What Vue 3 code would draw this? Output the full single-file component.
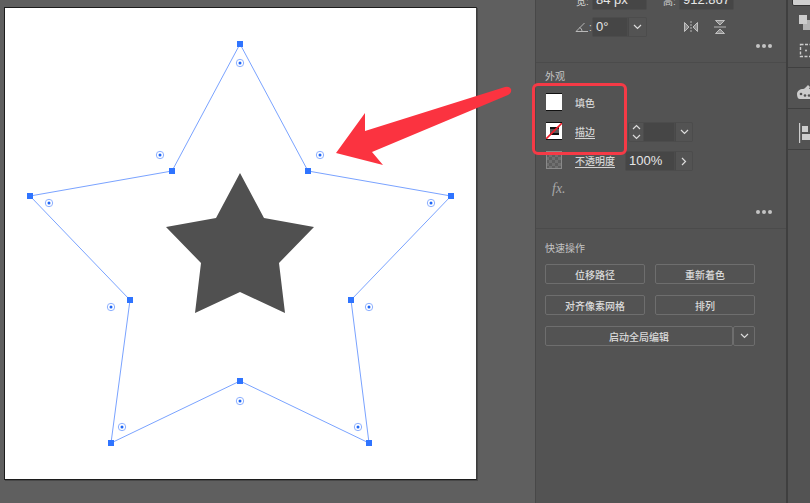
<template>
  <div class="app">
    <main class="canvas">
      <div class="artboard">
        <svg class="art" viewBox="5 8 471 471" width="471" height="471">
          <polygon class="solid" :points="innerStar" />
          <polygon class="path" :points="outerStar" />
          <rect v-for="p in anchors" :key="p.join()" class="anchor" :x="p[0] - 3" :y="p[1] - 3" width="6" height="6" />
          <g v-for="p in widgets" :key="p.join()">
            <circle class="widget" :cx="p[0]" :cy="p[1]" r="3.7" />
            <circle class="widget-dot" :cx="p[0]" :cy="p[1]" r="1.5" />
          </g>
        </svg>
      </div>
    </main>

    <aside class="panel">
      <section class="sec transform">
        <div class="row size-row">
          <span class="lbl">宽:</span>
          <div class="field w55">84 px</div>
          <span class="lbl h-lbl">高:</span>
          <div class="field w55">912.867</div>
        </div>
        <div class="row angle-row">
          <svg class="angle" viewBox="0 0 14 10" width="14" height="10">
            <path d="M1 9.5h12M1 9.5 9.5 1M7 9.5C7 7.5 6 6 4.5 5.5" />
          </svg>
          <span class="colon">:</span>
          <div class="combo">
            <div class="field w36 flat-r">0°</div>
            <div class="caret w19"><svg viewBox="0 0 9 6" width="9" height="6"><path d="M1 1l3.5 3.5L8 1" /></svg></div>
          </div>
          <svg class="flip flip-h" viewBox="0 0 14 12" width="14" height="12">
            <path class="fill" d="M.5 1.5v9L5 6zM13.5 1.5v9L9 6z" />
            <path d="M7 0v12" stroke-dasharray="2 1" />
          </svg>
          <svg class="flip flip-v" viewBox="0 0 12 14" width="12" height="14">
            <path class="fill" d="M1.5.5h9L6 5zM1.5 13.5h9L6 9z" />
            <path d="M0 7h12" />
          </svg>
        </div>
        <div class="more"><i></i><i></i><i></i></div>
      </section>

      <section class="sec look">
        <h3>外观</h3>
        <div class="row look-row first">
          <div class="swatch"></div>
          <span class="name">填色</span>
        </div>
        <div class="row look-row stroke">
          <div class="swatch stroke-swatch">
            <span class="inner"></span>
            <svg viewBox="0 0 16 16" width="16" height="16"><path d="M0 16 16 0" /></svg>
          </div>
          <span class="name link">描边</span>
          <div class="combo stepper">
            <div class="caret w15 steps">
              <svg viewBox="0 0 9 16" width="9" height="16"><path d="M1 5l3.5-3.5L8 5M1 11l3.5 3.5L8 11" /></svg>
            </div>
            <div class="field w32 flat"></div>
            <div class="caret w18"><svg viewBox="0 0 9 6" width="9" height="6"><path d="M1 1l3.5 3.5L8 1" /></svg></div>
          </div>
        </div>
        <div class="row look-row opacity">
          <div class="swatch checker"></div>
          <span class="name link">不透明度</span>
          <div class="combo op-combo">
            <div class="field w50 flat-r">100%</div>
            <div class="caret w18"><svg viewBox="0 0 6 9" width="6" height="9"><path d="M1 1l3.5 3.5L1 8" /></svg></div>
          </div>
        </div>
        <div class="fx">fx<span>.</span></div>
        <div class="more"><i></i><i></i><i></i></div>
      </section>

      <section class="sec quick">
        <h3>快速操作</h3>
        <div class="btn-grid">
          <button v-for="b in buttons" :key="b">{{ b }}</button>
        </div>
        <div class="global">
          <button class="wide">启动全局编辑</button>
          <button class="drop"><svg viewBox="0 0 9 6" width="9" height="6"><path d="M1 1l3.5 3.5L8 1" /></svg></button>
        </div>
      </section>
    </aside>

    <nav class="strip">
      <div class="group g1">
        <span class="tab"></span>
        <svg viewBox="0 0 14 15" width="14" height="15">
          <path class="icon-fill" d="M0 0h8v9H0z" />
          <path class="icon-fill" d="M4 5h9v10H4z" opacity=".8" />
        </svg>
        <svg viewBox="0 0 14 15" width="14" height="15">
          <rect class="icon-line" x="1.5" y="1.5" width="11" height="12" stroke-dasharray="3 1.5" />
          <circle class="icon-fill" cx="7" cy="7.5" r="1" />
        </svg>
      </div>
      <div class="group g2">
        <svg viewBox="0 0 16 16" width="16" height="16">
          <path class="icon-fill" d="M0 11c0-3 3-5 6-5 1.5 0 3-2 5-4l2 2-1 2h4v10H3c-2 0-3-2-3-5z" />
          <circle cx="4" cy="11" r="1.3" fill="#535353" />
          <circle cx="8" cy="12.5" r="1.3" fill="#535353" />
          <circle cx="12" cy="12.5" r="1.3" fill="#535353" />
        </svg>
      </div>
      <div class="group g3">
        <svg viewBox="0 0 12 20" width="12" height="20">
          <path class="icon-line" d="M.5 0v20" />
          <path class="icon-fill" d="M3 3h6v6H3zM3 11h9v6H3z" />
        </svg>
      </div>
    </nav>

    <div class="frame"></div>
    <svg class="arrow" viewBox="330 80 185 90" width="185" height="90">
      <path d="M336 153 365 113 365 131 505 87Q509 86 511 89 512 93 508 95L372 152 383 165Z" />
    </svg>
  </div>
</template>

<script setup>
const outer = [
  [240, 44], [308, 171], [451, 196], [351, 300], [369, 443],
  [240, 381], [111, 443], [130, 300], [30, 196], [172, 171],
];
const outerStar = outer.map((p) => p.join(",")).join(" ");
const anchors = outer;

const innerStar =
  "240,173 264,218 314,227 279,263 285,313 240,292 195,313 201,263 166,227 216,218";

const widgets = [
  [240, 63], [320, 155], [431, 203], [369, 307], [358, 427],
  [240, 401], [122, 427], [111, 307], [49, 203], [160, 155],
];

const buttons = ["位移路径", "重新着色", "对齐像素网格", "排列"];
</script>

<style>
html,
body {
  margin: 0;
  background: #5f5f5f;
}
</style>

<style scoped>
.app {
  position: relative;
  display: flex;
  width: 810px;
  height: 503px;
  overflow: hidden;
  background: #5f5f5f;
  font-family: "Liberation Sans", "Noto Sans CJK SC", sans-serif;
  font-size: 10px;
  color: #d0d0d0;
}

.canvas {
  width: 535px;
  flex: none;
  padding: 7px 0 0 4px;
  box-sizing: border-box;
}
.artboard {
  width: 471px;
  height: 471px;
  border: 1px solid #1c1c1c;
  border-right-color: #3c3c3c;
  background: #fff;
  box-shadow: 1px 1px 0 #484848;
}
.art {
  display: block;
}
.solid {
  fill: #505050;
}
.path {
  fill: none;
  stroke: #7aa3ff;
  stroke-width: 1;
}
.anchor {
  fill: #2f74ff;
}
.widget {
  fill: #fff;
  stroke: #8db0ff;
  stroke-width: 1;
}
.widget-dot {
  fill: #1f66f5;
}

.panel {
  width: 251px;
  flex: none;
  box-sizing: border-box;
  border-left: 1px solid #484848;
  background: #535353;
}
.sec {
  padding-left: 9px;
  border-bottom: 1px solid #4b4b4b;
}
.row {
  display: flex;
  align-items: center;
}
.transform {
  display: flow-root;
  height: 63px;
  box-sizing: border-box;
}
.size-row {
  height: 20px;
  margin-top: -10px;
  padding-left: 31px;
}
.lbl {
  flex: none;
  width: 16px;
  font-size: 10px;
  white-space: nowrap;
  color: #cfcfcf;
}
.h-lbl {
  margin-left: 16px;
}
.field {
  height: 20px;
  box-sizing: border-box;
  padding-left: 3px;
  background: #464646;
  border: 1px solid #4c4c4c;
  border-radius: 2px;
  font-size: 13px;
  line-height: 18px;
  color: #e6e6e6;
}
.w55 {
  width: 55px;
}
.w36 {
  width: 36px;
}
.w32 {
  width: 32px;
}
.w50 {
  width: 50px;
}
.flat-r {
  border-radius: 2px 0 0 2px;
}
.flat {
  border-radius: 0;
}
.angle-row {
  height: 20px;
  margin-top: 7px;
  padding-left: 30px;
}
.angle {
  flex: none;
  fill: none;
  stroke: #b8b8b8;
  stroke-width: 1;
}
.colon {
  flex: none;
  width: 3px;
  font-size: 10px;
  color: #cfcfcf;
}
.combo {
  display: flex;
  flex: none;
}
.caret {
  display: flex;
  align-items: center;
  justify-content: center;
  height: 20px;
  box-sizing: border-box;
  border: 1px solid #4c4c4c;
  border-left: 1px solid #484848;
  border-radius: 0 2px 2px 0;
}
.caret svg,
.drop svg {
  fill: none;
  stroke: #dcdcdc;
  stroke-width: 1.2;
}
.w19 {
  width: 19px;
}
.w18 {
  width: 18px;
}
.w15 {
  width: 15px;
}
.flip {
  flex: none;
  fill: none;
  stroke: #b5b5b5;
  stroke-width: 1;
}
.flip .fill {
  fill: #8d8d8d;
  stroke: #c0c0c0;
}
.flip-h {
  margin-left: 37px;
}
.flip-v {
  margin-left: 16px;
}
.more {
  display: flex;
  gap: 2px;
  justify-content: flex-end;
  padding-right: 14px;
  margin-top: 7px;
}
.more i {
  width: 4px;
  height: 4px;
  border-radius: 50%;
  background: #c4c4c4;
}

.look {
  height: 166px;
  box-sizing: border-box;
}
h3 {
  margin: 0;
  font-size: 10px;
  font-weight: 400;
  line-height: 14px;
  color: #c4c4c4;
}
.look h3 {
  padding-top: 7px;
}
.look-row {
  height: 18px;
}
.first {
  margin-top: 9px;
}
.stroke {
  margin-top: 11px;
}
.opacity {
  margin-top: 11px;
}
.swatch {
  width: 16px;
  height: 16px;
  flex: none;
  position: relative;
  margin-left: 1px;
  background: #fff;
  border-top: 1px solid #111;
  border-bottom: 1px solid #111;
}
.stroke-swatch svg {
  position: absolute;
  left: 0;
  top: 0;
  fill: none;
  stroke: #f0202c;
  stroke-width: 1.6;
}
.inner {
  position: absolute;
  left: 4px;
  top: 4px;
  width: 9px;
  height: 8px;
  box-sizing: border-box;
  border-top: 2px solid #111;
  border-bottom: 2px solid #111;
  background: #5a5a5a;
}
.checker {
  border: none;
  height: 18px;
  background: repeating-conic-gradient(#5e5e5e 0 25%, #707070 0 50%) 0 0 / 6px 6px;
  box-shadow: inset 0 0 0 1px #8a8a8a;
}
.name {
  flex: none;
  margin-left: 13px;
  font-size: 10px;
  font-weight: 500;
  color: #d4d4d4;
  white-space: nowrap;
}
.link {
  text-decoration: underline;
  text-underline-offset: 2px;
}
.stepper {
  margin: 2px 0 0 33px;
}
.steps {
  border-right: none;
  border-radius: 2px 0 0 2px;
}
.op-combo {
  margin: 2px 0 0 10px;
}
.fx {
  margin: 12px 0 0 7px;
  font-family: "Liberation Serif", serif;
  font-style: italic;
  font-size: 14px;
  line-height: 16px;
  color: #a8a8a8;
}
.look .more {
  margin-top: 13px;
}

.quick {
  border-bottom: none;
  padding-top: 13px;
}
.btn-grid {
  display: grid;
  grid-template-columns: 100px 100px;
  column-gap: 10px;
  row-gap: 11px;
  margin-top: 8px;
}
button {
  height: 20px;
  padding: 0;
  box-sizing: border-box;
  background: #535353;
  border: 1px solid #6e6e6e;
  border-radius: 2px;
  font-family: "Liberation Sans", "Noto Sans CJK SC", sans-serif;
  font-size: 10px;
  font-weight: 500;
  color: #dadada;
}
.global {
  display: flex;
  margin-top: 11px;
}
.wide {
  width: 188px;
}
.drop {
  width: 22px;
  display: flex;
  align-items: center;
  justify-content: center;
}

.strip {
  width: 24px;
  flex: none;
  box-sizing: border-box;
  border-left: 2px solid #3f3f3f;
  background: #535353;
}
.group {
  display: flex;
  flex-direction: column;
  align-items: flex-start;
  box-sizing: border-box;
  border-bottom: 1px solid #404040;
  padding-left: 11px;
}
.group svg {
  flex: none;
}
.g1 {
  position: relative;
  height: 68px;
  padding-top: 15px;
  gap: 13px;
}
.tab {
  position: absolute;
  left: 4px;
  top: -2px;
  width: 20px;
  height: 6px;
  background: #cfcfcf;
  border: 1px solid #333;
  border-radius: 2px;
}
.g2 {
  height: 41px;
  padding-top: 15px;
  padding-left: 9px;
}
.g3 {
  height: 41px;
  padding-top: 14px;
}
.icon-fill {
  fill: #cdcdcd;
}
.icon-line {
  fill: none;
  stroke: #cdcdcd;
  stroke-width: 1.4;
}

.frame {
  position: absolute;
  left: 532px;
  top: 83px;
  width: 95px;
  height: 72px;
  box-sizing: border-box;
  border: 3px solid #f53a46;
  border-radius: 6px;
}
.arrow {
  position: absolute;
  left: 330px;
  top: 80px;
  fill: #fb3340;
}
</style>
